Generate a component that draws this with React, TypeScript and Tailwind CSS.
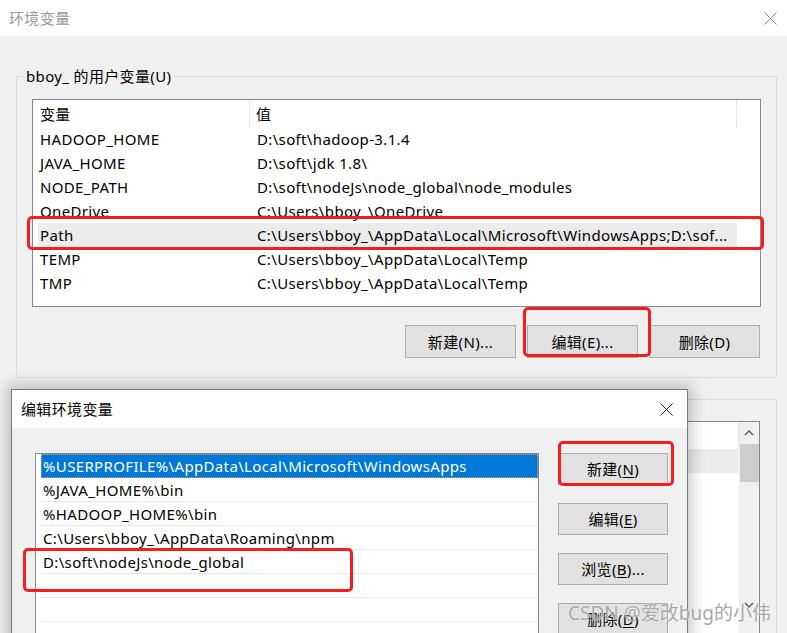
const USER_VARS: [string, string][] = [
  ['HADOOP_HOME', 'D:\\soft\\hadoop-3.1.4'],
  ['JAVA_HOME', 'D:\\soft\\jdk 1.8\\'],
  ['NODE_PATH', 'D:\\soft\\nodeJs\\node_global\\node_modules'],
  ['OneDrive', 'C:\\Users\\bboy_\\OneDrive'],
  ['Path', 'C:\\Users\\bboy_\\AppData\\Local\\Microsoft\\WindowsApps;D:\\sof...'],
  ['TEMP', 'C:\\Users\\bboy_\\AppData\\Local\\Temp'],
  ['TMP', 'C:\\Users\\bboy_\\AppData\\Local\\Temp'],
];

const PATH_ITEMS = [
  '%USERPROFILE%\\AppData\\Local\\Microsoft\\WindowsApps',
  '%JAVA_HOME%\\bin',
  '%HADOOP_HOME%\\bin',
  'C:\\Users\\bboy_\\AppData\\Roaming\\npm',
  'D:\\soft\\nodeJs\\node_global',
  '',
  '',
  '',
];

function CloseX({ color }: { color: string }) {
  return (
    <svg width="13" height="13" viewBox="0 0 13 13" fill="none">
      <path d="M0.5 0.5L12.5 12.5M12.5 0.5L0.5 12.5" stroke={color} strokeWidth="1" />
    </svg>
  );
}

function Chevron({ down }: { down?: boolean }) {
  return (
    <svg width="10" height="6" viewBox="0 0 10 6" fill="none">
      <path
        d={down ? 'M1 1L5 5L9 1' : 'M1 5L5 1L9 5'}
        stroke="#606060"
        strokeWidth="1.5"
      />
    </svg>
  );
}

function WinButton({ label, className = '' }: { label: React.ReactNode; className?: string }) {
  return (
    <div
      className={`flex shrink-0 items-center justify-center border border-[#adadad] bg-[#e1e1e1] ${className}`}
    >
      {label}
    </div>
  );
}

function Mnemonic({ pre, key_, post = '' }: { pre: string; key_: string; post?: string }) {
  return (
    <span>
      {pre}(<span className="underline underline-offset-2">{key_}</span>){post}
    </span>
  );
}

function RedMark({ className }: { className: string }) {
  return (
    <div
      className={`pointer-events-none absolute rounded-[5px] border-[3px] border-[#f41e1e] ${className}`}
    />
  );
}

export default function App() {
  return (
    <div className="relative h-[633px] w-[787px] overflow-hidden bg-[#f0f0f0] font-['Noto_Sans','Noto_Sans_CJK_SC',sans-serif] text-[15px] leading-[20px] tracking-[0.35px] text-black">
      {/* main window title */}
      <div className="flex h-[36px] items-center justify-between bg-white pl-[9px] pr-[10px]">
        <span className="text-[#9a9a9a]">环境变量</span>
        <CloseX color="#8a8a8a" />
      </div>

      <div className="flex flex-col pl-[16px] pr-[10px] pt-[40px]">
        {/* user variables group */}
        <div className="relative h-[302px] shrink-0 border border-[#dcdcdc] pl-[15px] pr-[15px] pt-[22px]">
          <span className="absolute left-[8px] top-[-11px] bg-[#f0f0f0] pl-[1px] pr-[3px]">
            bboy_ 的用户变量(U)
          </span>
          <div className="h-[208px] border border-[#828790] bg-white">
            <div className="flex h-[27px] items-center pl-[5px]">
              <div className="flex h-full w-[212px] items-center border-r border-[#e5e5e5] pl-[2px]">
                变量
              </div>
              <div className="flex h-full w-[487px] items-center border-r border-[#e5e5e5] pl-[6px]">
                值
              </div>
            </div>
            <div className="pl-[5px]">
              {USER_VARS.map(([name, value]) => (
                <div
                  key={name}
                  className={`flex h-[24px] w-[699px] items-center whitespace-nowrap ${
                    name === 'Path' ? 'bg-[#ececec]' : ''
                  }`}
                >
                  <div className="w-[212px] pl-[2px]">{name}</div>
                  <div className="w-[487px] overflow-hidden pl-[7px]">{value}</div>
                </div>
              ))}
            </div>
          </div>
          <div className="flex justify-end gap-[11px] pr-[1px] pt-[18px]">
            <WinButton className="h-[33px] w-[111px]" label="新建(N)..." />
            <WinButton className="h-[33px] w-[111px]" label="编辑(E)..." />
            <WinButton className="h-[33px] w-[111px]" label="删除(D)" />
          </div>
        </div>

        {/* system variables group (mostly hidden) */}
        <div className="relative mt-[21px] h-[300px] shrink-0 border border-[#dcdcdc] pl-[15px] pr-[16px] pt-[21px]">
          <span className="absolute left-[8px] top-[-11px] bg-[#f0f0f0] pl-[1px] pr-[3px]">
            系统变量(S)
          </span>
          <div className="flex h-[240px] border border-[#828790] bg-white">
            <div className="flex flex-1 flex-col pl-[5px]">
              <div className="flex h-[27px] shrink-0">
                <div className="w-[212px] border-r border-[#e5e5e5]" />
                <div className="flex-1 border-r border-[#e5e5e5]" />
              </div>
              <div className="h-[24px] shrink-0 bg-[#ececec]" />
            </div>
            <div className="flex w-[20px] flex-col items-center bg-[#f0f0f0]">
              <div className="flex h-[22px] shrink-0 items-center justify-center">
                <Chevron />
              </div>
              <div className="h-[38px] w-[19px] shrink-0 bg-[#cdcdcd]" />
              <div className="flex-1" />
              <div className="mb-[44px] flex h-[22px] shrink-0 items-center justify-center">
                <Chevron down />
              </div>
            </div>
          </div>
        </div>
      </div>

      {/* edit dialog */}
      <div className="absolute left-[11px] top-[389px] flex h-[260px] w-[677px] flex-col border border-[#7a7a7a] bg-[#f0f0f0] shadow-[0_0_14px_4px_rgba(0,0,0,0.22)]">
        <div className="flex h-[38px] shrink-0 items-center justify-between bg-white pl-[9px] pr-[14px]">
          <span>编辑环境变量</span>
          <CloseX color="#1a1a1a" />
        </div>
        <div className="flex shrink-0 pl-[23px] pt-[25px]">
          <div className="h-[220px] w-[504px] shrink-0 border border-[#828790] bg-white pl-[5px]">
            {PATH_ITEMS.map((item, i) => (
              <div
                key={i}
                className={`flex h-[24px] items-center whitespace-nowrap pl-[2px] ${
                  i === 0
                    ? 'bg-[#0078d7] text-white outline outline-1 -outline-offset-1 outline-dotted outline-[#e0a060]'
                    : 'border-b border-[#e8e8e8]'
                }`}
              >
                {item}
              </div>
            ))}
          </div>
          <div className="ml-[19px] flex flex-col gap-[18px]">
            <WinButton className="h-[32px] w-[110px]" label={<Mnemonic pre="新建" key_="N" />} />
            <WinButton className="h-[32px] w-[110px]" label={<Mnemonic pre="编辑" key_="E" />} />
            <WinButton
              className="h-[32px] w-[110px]"
              label={<Mnemonic pre="浏览" key_="B" post="..." />}
            />
            <WinButton className="h-[32px] w-[110px]" label={<Mnemonic pre="删除" key_="D" />} />
          </div>
        </div>
      </div>

      {/* annotations */}
      <RedMark className="left-[27px] top-[216px] h-[34px] w-[737px]" />
      <RedMark className="left-[523px] top-[307px] h-[50px] w-[128px]" />
      <RedMark className="left-[558px] top-[441px] h-[45px] w-[116px]" />
      <RedMark className="left-[23px] top-[548px] h-[44px] w-[330px]" />

      <div className="pointer-events-none absolute left-[568px] top-[600px] whitespace-nowrap text-[19px] leading-[26px] tracking-normal text-[#a9a9a9] [text-shadow:0_0_2px_rgba(255,255,255,0.95)]">
        CSDN @爱改bug的小伟
      </div>
    </div>
  );
}
